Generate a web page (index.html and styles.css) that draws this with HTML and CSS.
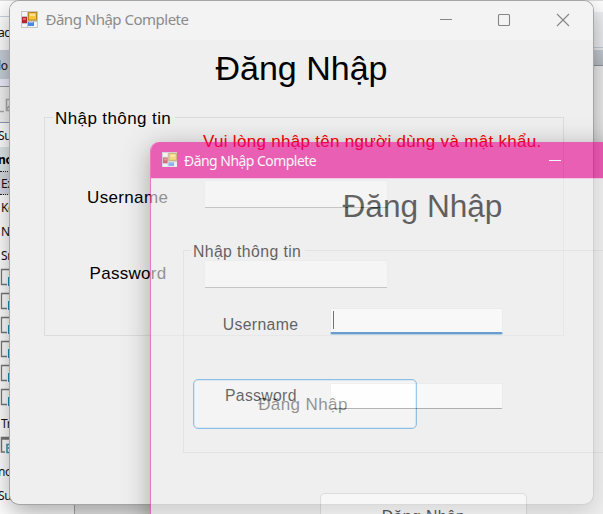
FILE: index.html
```html
<!DOCTYPE html>
<html lang="vi">
<head>
<meta charset="utf-8">
<title>Đăng Nhập Complete</title>
<link rel="stylesheet" href="styles.css">
</head>
<body>
<svg class="defs" width="0" height="0">
  <symbol id="form" viewBox="0 0 17 17">
    <rect width="17" height="17" fill="#c5c5c5"/>
    <path d="M1 1h5v4H1zM1 13h5v3H1zM7 11h9v5H7z" fill="#f4f4f4"/>
    <rect x="7.5" y="1.5" width="8" height="7.5" fill="#f7c43b" stroke="#b88a25"/>
    <path d="M9 3h5v2H9z" fill="#ffe58a"/>
    <rect x="1" y="6" width="5" height="6" fill="#b9252b"/>
    <path d="M2 7h3v2H2z" fill="#e06a63"/>
    <rect x="7" y="11" width="6" height="4" fill="#4c86e4"/>
    <path d="M8 11h4v1H8z" fill="#91b9f5"/>
  </symbol>
  <symbol id="item" viewBox="0 0 9 18">
    <path d="M9 1.5H1.5v15H7" fill="none" stroke="#777" stroke-width="1.3"/>
    <path d="M8 9h1v9H8z" fill="#198dc2"/>
  </symbol>
</svg>
<div class="desktop">
  <div class="strip"></div>
  <div class="panes">
    <div class="list">
      <div class="row head">ac</div>
      <div class="row tab">lo</div>
      <div class="row tools"><svg width="10" height="18" viewBox="0 0 10 18"><path d="M0 14.5h4M10 2.5H6.5v11H10M7 12l3-4" fill="none" stroke="#aaa" stroke-width="1.5"/></svg></div>
      <div class="row">Su</div>
      <div class="row strong">no</div>
      <div class="row in dotted">Ex</div>
      <div class="row in">Ke</div>
      <div class="row in">Na</div>
      <div class="row in">Sr</div>
      <div class="row icon"><svg width="9" height="18"><use href="#item"/></svg></div>
      <div class="row icon"><svg width="9" height="18"><use href="#item"/></svg></div>
      <div class="row icon"><svg width="9" height="18"><use href="#item"/></svg></div>
      <div class="row icon"><svg width="9" height="18"><use href="#item"/></svg></div>
      <div class="row icon"><svg width="9" height="18"><use href="#item"/></svg></div>
      <div class="row icon"><svg width="9" height="18"><use href="#item"/></svg></div>
      <div class="row in">Tr</div>
      <div class="row icon"><svg width="10" height="18" viewBox="0 0 10 18"><path d="M10 1.5H1.5v14.5H5M1 3h9" fill="none" stroke="#777" stroke-width="1.5"/><path d="M10 8.5H7v8h3M8 12h2" fill="none" stroke="#2596c4" stroke-width="1.5"/></svg></div>
      <div class="row">no</div>
      <div class="row">Su</div>
    </div>
    <div class="editor"><div class="bar"></div><div class="ribbon"></div></div>
  </div>
</div>

<section class="window first">
  <header class="titlebar">
    <svg class="appicon"><use href="#form"/></svg>
    <span class="caption">Đăng Nhập Complete</span>
    <svg class="controls" width="130" height="14" viewBox="0 0 130 14"><path d="M0 6.5h12" /><rect x="58.5" y="1.5" width="11" height="11" rx="1"/><path d="M117 1l12 12M129 1l-12 12"/></svg>
  </header>
  <h1>Đăng Nhập</h1>
  <div class="group">
    <div class="legend"><span>Nhập thông tin</span></div>
    <p class="error">Vui lòng nhập tên người dùng và mật khẩu.</p>
    <div class="field"><label>Username</label><div class="box"></div></div>
    <div class="field second"><label class="pw">Password</label><div class="box"></div></div>
  </div>
  <button class="default"><span>Đăng Nhập</span></button>
</section>

<section class="window ghost">
  <header class="titlebar">
    <svg class="appicon"><use href="#form"/></svg>
    <span class="caption">Đăng Nhập Complete</span>
    <svg class="controls" width="130" height="14" viewBox="0 0 130 14"><path d="M0 7.5h12"/></svg>
  </header>
  <h1>Đăng Nhập</h1>
  <div class="group">
    <div class="legend"><span>Nhập thông tin</span></div>
    <p class="error"></p>
    <div class="field"><label>Username</label><div class="box focus"><i class="caret"></i></div></div>
    <div class="field second"><label class="pw">Password</label><div class="box"></div></div>
  </div>
  <button><span>Đăng Nhập</span></button>
</section>
</body>
</html>
```
FILE: styles.css
```css
* { box-sizing: border-box; }
html { overflow: hidden; }
body { margin: 0; width: 603px; height: 514px; overflow: hidden; position: relative; font-family: "Liberation Sans", Arial, sans-serif; }
.defs { display: block; height: 0; }
.desktop { height: 514px; display: flex; flex-direction: column; background: #efefef; }
.strip { height: 1px; flex: none; background: linear-gradient(90deg, #ddd 0 70px, #2191bd 70px 98px, #bbb 98px 393px, #2191bd 393px 421px, #bbb 421px 480px, #2191bd 480px 491px, #bbb 491px 538px, #2191bd 538px 565px, #ddd 565px); }
.panes { flex: 1; display: flex; min-height: 0; }
.list { width: 75px; border-right: 1px solid #aaa; background: #fff; overflow: hidden; font: 12px/24px "Noto Sans", sans-serif; letter-spacing: -.4px; color: #111; }
.row { height: 24px; padding-top: 1px; white-space: nowrap; text-indent: -2px; display: flex; align-items: center; }
.row.in { text-indent: 1px; }
.row.icon { padding: 0 0 4px; }
.row.head { height: 50px; padding-top: 15px; background: linear-gradient(#fff 15px, #c8d4e0 15px 16px, #fff 16px); border-bottom: 1px solid #ccd; }
.row.tab { height: 28px; padding-top: 2px; background: #c9d0da; }
.row.tools { height: 44px; border-bottom: 1px solid #8e9db8; background: linear-gradient(#eef 7px, #999 7px 8px, #f3f3f3 8px); padding-top: 10px; }
.row.strong { background: #dfe8ea; font-weight: bold; color: #000; }
.row.dotted { background: #d7dbe2; border-top: 1px dotted #222; border-bottom: 1px dotted #222; }
.editor { flex: 1; background: #eee; }
.bar { height: 47px; background: linear-gradient(#fff 11px, #eef0f4 11px); border-bottom: 1px solid #c5d0dc; }
.ribbon { height: 16px; margin-top: 2px; background: linear-gradient(#c8ced5, #b9bfc6); border-bottom: 1px solid #8e969e; }

.window { --s: 1; position: absolute; background: #efefef; overflow: hidden; border-radius: 9px; }
.first { left: 10px; top: 1px; width: 583px; height: 503px; box-shadow: 0 0 0 1px #a5a5a5, 0 8px 26px rgba(0,0,0,.36); }
.ghost { --s: .93; left: 150px; top: 142px; width: 544px; height: 470px; opacity: .6; border-left: 1px solid #eb2aa2; box-shadow: 0 5px 26px rgba(0,0,0,.5); }
.titlebar { height: calc(38px * var(--s) + 1px); display: flex; align-items: center; background: #f3f3f3; padding-left: calc(11.5px * var(--s)); color: #8b8b8b; font: calc(15px * var(--s)) "Noto Sans", sans-serif; }
.first .titlebar { padding-left: 11px; }
.ghost .titlebar { background: #e6008c; color: #fff; border-bottom: 1px solid #f3b6da; height: 37px; }
.appicon { width: calc(17px * var(--s)); height: calc(17px * var(--s)); margin: 0 calc(7px * var(--s)) 2px 0; flex: none; }
.first .appicon { margin-right: 7.5px; }
.ghost .appicon { margin-bottom: 1px; }
.caption { flex: none; white-space: nowrap; letter-spacing: -.5px; }
.first .caption { padding-bottom: 3px; }
.controls { margin-left: auto; margin-right: 23px; fill: none; stroke: #858585; stroke-width: 1.1; }
.first .controls { margin-bottom: 1px; }
.ghost .controls { stroke: #fff; margin-right: 15px; }
h1 { margin: 0; height: calc(77px * var(--s)); padding-top: calc(9px * var(--s)); text-align: center; font-weight: 400; font-size: calc(34px * var(--s)); line-height: calc(42px * var(--s)); color: #000; }
.first h1 { padding-top: 7px; }
.ghost h1 { height: 71px; }
.group { width: calc(520px * var(--s)); height: calc(219px * var(--s)); margin-left: calc(34px * var(--s)); border: 1px solid #dcdcdc; border-top: 0; }
.ghost .group { height: 203px; }
.legend { display: flex; align-items: flex-start; height: 14px; font-size: calc(17px * var(--s)); letter-spacing: .4px; line-height: 3px; color: #000; white-space: nowrap; }
.legend::before, .legend::after { content: ""; height: 1px; background: #dcdcdc; }
.legend::before { width: calc(8px * var(--s)); margin-right: calc(2px * var(--s)); }
.legend::after { flex: 1; margin-left: 4px; }
.error { margin: 0 0 0 calc(158px * var(--s)); height: calc(49px * var(--s)); line-height: 22px; font-size: 17px; letter-spacing: .3px; color: #f00; white-space: nowrap; }
.ghost .error { height: 44px; }
.field { display: flex; width: calc(343px * var(--s)); height: calc(28px * var(--s)); }
.field.second { margin-top: calc(52px * var(--s)); }
.ghost .second { margin-top: 49px; }
.field label { width: calc(159px * var(--s)); padding-left: calc(42px * var(--s)); font-size: calc(17px * var(--s)); letter-spacing: .35px; line-height: calc(35px * var(--s)); color: #000; }
.field .pw { padding-left: calc(44.5px * var(--s)); line-height: calc(28px * var(--s)); letter-spacing: .3px; }
.ghost .field label { line-height: 34px; }
.ghost .field .pw { line-height: 26px; }
.box { flex: 1; background: #fff; border: 1px solid #e9e9e9; border-bottom: 1px solid #858585; border-radius: 2px; }
.ghost .box { margin-left: -1px; }
.box.focus { border-bottom: 2px solid #1266b8; padding: 2px; box-shadow: 0 1px 0 #8cbce3; }
.caret { display: block; width: 1px; height: 18px; background: #222; }
button { display: block; width: calc(224px * var(--s)); height: calc(50px * var(--s)); margin: calc(43px * var(--s)) 0 0 calc(183px * var(--s)); padding: 0; border: 1px solid #d0d0d0; border-radius: 5px; background: #fdfdfd; font: calc(17px * var(--s)) "Liberation Sans", sans-serif; letter-spacing: .4px; color: #000; }
.ghost button { margin-left: 169px; width: 207px; padding-top: 2px; }
button.default { border: 1px solid #0078d4; box-shadow: inset 0 0 0 1px #b9ddf5; padding: 2px 4px 0 0; }
```
